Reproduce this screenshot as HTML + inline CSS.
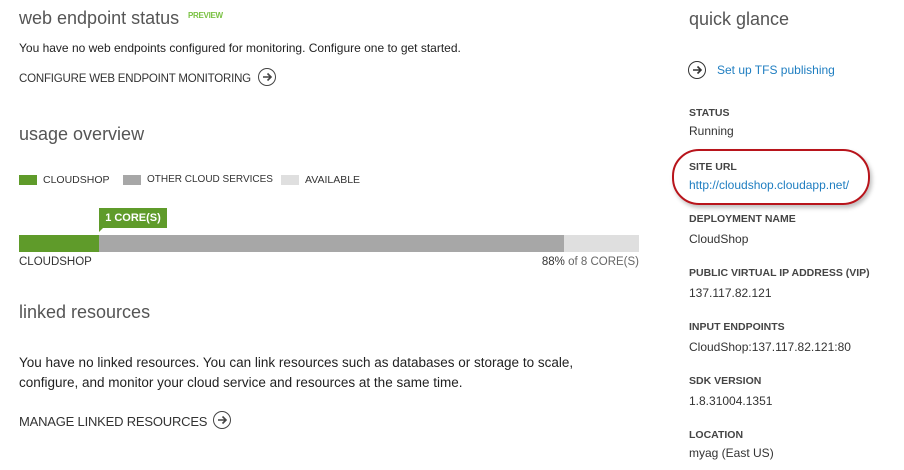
<!DOCTYPE html>
<html><head><meta charset="utf-8"><style>
body{margin:0;width:904px;height:470px;background:#fff;position:relative;overflow:hidden;font-family:"Liberation Sans",sans-serif;color:#222}
.a{position:absolute;white-space:nowrap}
.h{font-size:18px;color:#555;font-weight:300}
.t{font-size:12px;color:#222}
.cap{font-size:11.5px;color:#333;letter-spacing:-0.2px}
.lbl{font-size:10.5px;font-weight:bold;color:#444}
.val{font-size:12px;color:#333}
.circ{position:absolute;width:16px;height:16px;border:1.6px solid #444;border-radius:50%}
.circ svg{position:absolute;left:2px;top:2px}
.sq{position:absolute;width:18px;height:10px}
</style></head><body>
<div class="a h" style="left:19px;top:8px">web endpoint status</div>
<div class="a" style="left:188px;top:11px;font-size:8px;font-weight:bold;color:#7ac143;letter-spacing:-0.3px">PREVIEW</div>
<div class="a t" style="left:19px;top:41px;font-size:12px">You have no web endpoints configured for monitoring. Configure one to get started.</div>
<div class="a cap" style="left:19px;top:73px">CONFIGURE WEB ENDPOINT MONITORING</div>
<div class="circ" style="left:258px;top:68px"><svg width="12" height="12" viewBox="0 0 12 12"><path d="M2 6H10M6.5 2.5L10 6 6.5 9.5" fill="none" stroke="#444" stroke-width="1.6"/></svg></div>

<div class="a h" style="left:19px;top:124px">usage overview</div>
<div class="sq" style="left:19px;top:175px;background:#5f9b2a"></div>
<div class="a" style="left:43px;top:174px;font-size:10.5px;color:#333">CLOUDSHOP</div>
<div class="sq" style="left:123px;top:175px;background:#a7a7a7"></div>
<div class="a" style="left:147px;top:174px;font-size:10px;color:#333">OTHER CLOUD SERVICES</div>
<div class="sq" style="left:281px;top:175px;background:#dfdfdf"></div>
<div class="a" style="left:305px;top:174px;font-size:10.5px;color:#333">AVAILABLE</div>

<div class="a" style="left:99px;top:208px;width:68px;height:20px;background:#5f9b2a;color:#fff;font-size:11px;font-weight:bold;line-height:20px;text-align:center">1 CORE(S)</div>
<div class="a" style="left:99px;top:227px;width:0;height:0;border-left:5px solid #5f9b2a;border-bottom:5px solid transparent"></div>
<div class="a" style="left:19px;top:235px;width:80px;height:17px;background:#5f9b2a"></div>
<div class="a" style="left:99px;top:235px;width:465px;height:17px;background:#a7a7a7"></div>
<div class="a" style="left:564px;top:235px;width:75px;height:17px;background:#dfdfdf"></div>
<div class="a" style="left:19px;top:256px;font-size:11.5px;color:#333">CLOUDSHOP</div>
<div class="a" style="right:265px;top:256px;font-size:11.5px;color:#333">88% <span style="color:#666">of 8 CORE(S)</span></div>

<div class="a h" style="left:19px;top:302px">linked resources</div>
<div class="a" style="left:19px;top:353px;font-size:13.5px;color:#222;line-height:20px">You have no linked resources. You can link resources such as databases or storage to scale,<br>configure, and monitor your cloud service and resources at the same time.</div>
<div class="a cap" style="left:19px;top:414px;font-size:13px">MANAGE LINKED RESOURCES</div>
<div class="circ" style="left:213px;top:411px"><svg width="12" height="12" viewBox="0 0 12 12"><path d="M2 6H10M6.5 2.5L10 6 6.5 9.5" fill="none" stroke="#444" stroke-width="1.6"/></svg></div>

<div class="a h" style="left:689px;top:9px">quick glance</div>
<div class="circ" style="left:688px;top:61px;border-color:#333"><svg width="12" height="12" viewBox="0 0 12 12"><path d="M2 6H10M6.5 2.5L10 6 6.5 9.5" fill="none" stroke="#333" stroke-width="1.6"/></svg></div>
<div class="a" style="left:717px;top:63px;font-size:12px;color:#1f7ec1">Set up TFS publishing</div>

<div class="a lbl" style="left:689px;top:107px">STATUS</div>
<div class="a val" style="left:689px;top:124px">Running</div>
<div class="a" style="left:672px;top:149px;width:194px;height:52px;border:2px solid #b8141b;border-radius:27px;box-shadow:2px 3px 4px rgba(0,0,0,0.25)"></div>
<div class="a lbl" style="left:689px;top:161px">SITE URL</div>
<div class="a val" style="left:689px;top:178px;color:#1f7ec1">http://cloudshop.cloudapp.net/</div>
<div class="a lbl" style="left:689px;top:213px">DEPLOYMENT NAME</div>
<div class="a val" style="left:689px;top:232px">CloudShop</div>
<div class="a lbl" style="left:689px;top:267px">PUBLIC VIRTUAL IP ADDRESS (VIP)</div>
<div class="a val" style="left:689px;top:286px">137.117.82.121</div>
<div class="a lbl" style="left:689px;top:321px">INPUT ENDPOINTS</div>
<div class="a val" style="left:689px;top:340px">CloudShop:137.117.82.121:80</div>
<div class="a lbl" style="left:689px;top:375px">SDK VERSION</div>
<div class="a val" style="left:689px;top:394px">1.8.31004.1351</div>
<div class="a lbl" style="left:689px;top:429px">LOCATION</div>
<div class="a val" style="left:689px;top:446px">myag (East US)</div>
</body></html>
